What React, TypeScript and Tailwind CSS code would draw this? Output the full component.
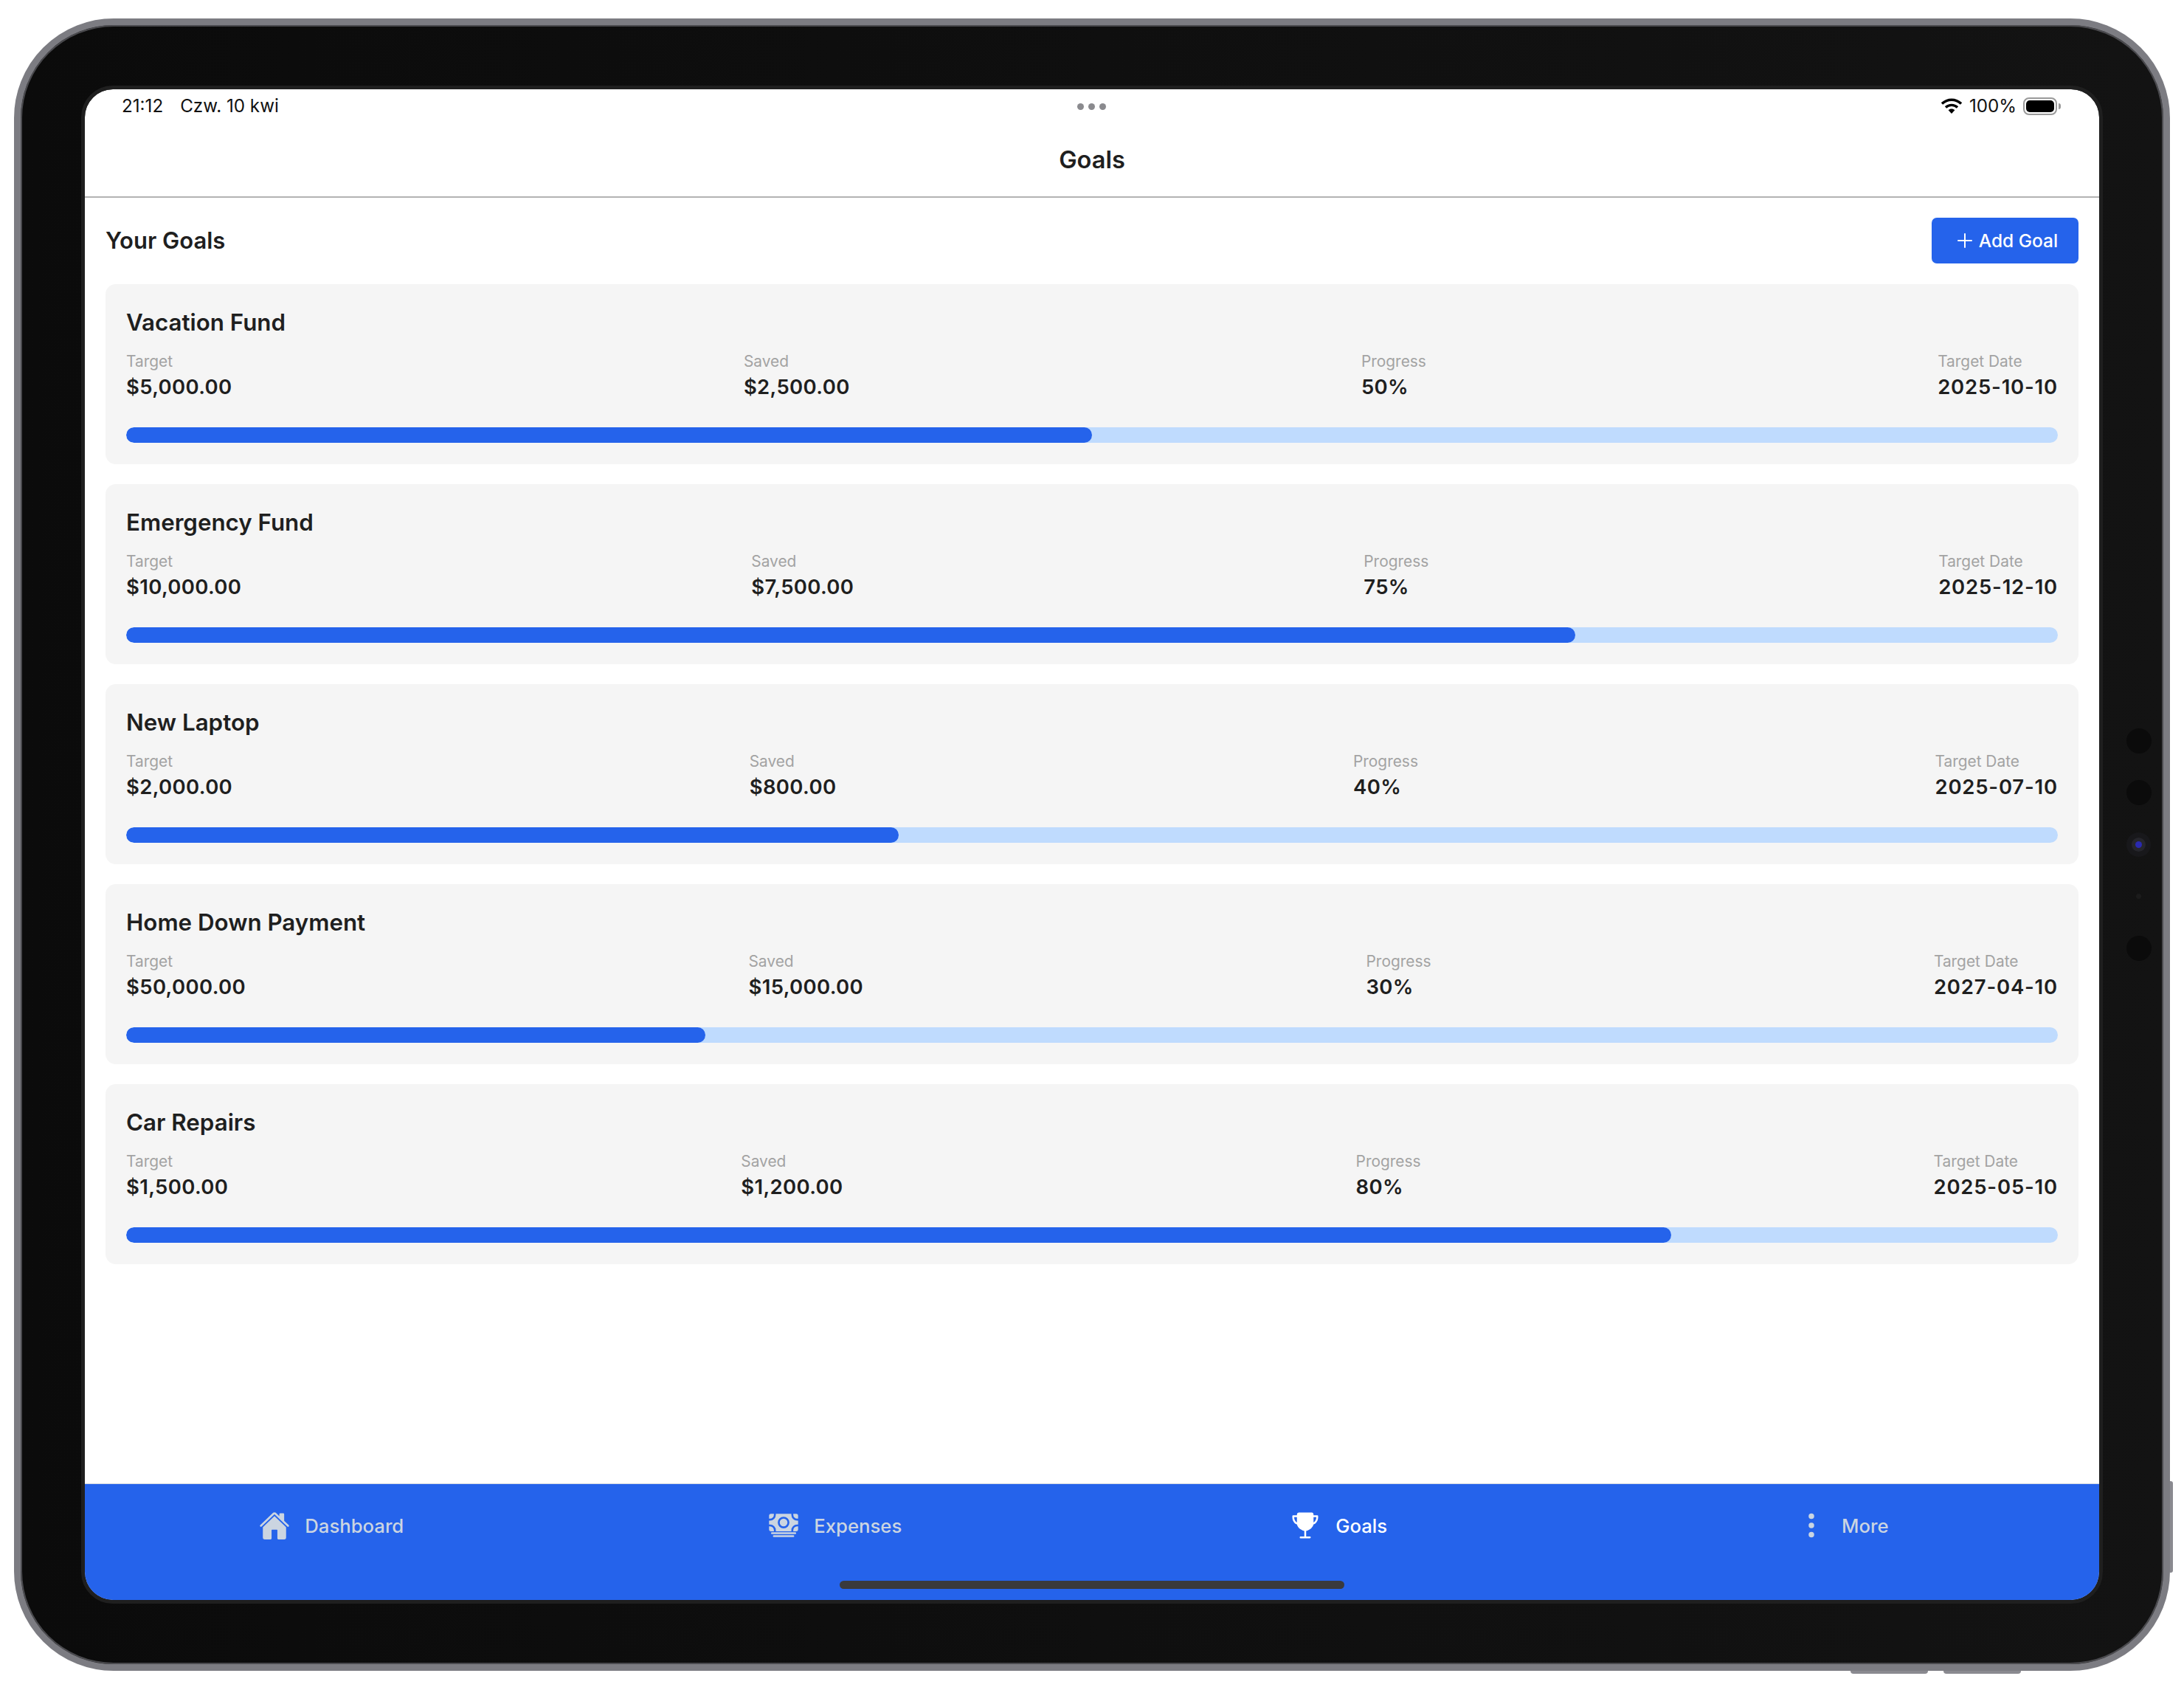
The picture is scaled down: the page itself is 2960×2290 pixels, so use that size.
import React from "react";
import { IoHome, IoCash, IoTrophy, IoEllipsisVertical, IoAdd } from "react-icons/io5";

const goals = [
  { name: "Vacation Fund", target: "$5,000.00", saved: "$2,500.00", progress: 50, date: "2025-10-10" },
  { name: "Emergency Fund", target: "$10,000.00", saved: "$7,500.00", progress: 75, date: "2025-12-10" },
  { name: "New Laptop", target: "$2,000.00", saved: "$800.00", progress: 40, date: "2025-07-10" },
  { name: "Home Down Payment", target: "$50,000.00", saved: "$15,000.00", progress: 30, date: "2027-04-10" },
  { name: "Car Repairs", target: "$1,500.00", saved: "$1,200.00", progress: 80, date: "2025-05-10" },
];

const font = "font-['Inter','Liberation_Sans',sans-serif]";

function Stat({ label, value, wide }: { label: string; value: string; wide?: boolean }) {
  return (
    <div className="flex flex-col">
      <span className="h-[28px] text-[20.9px] leading-[28px] text-[#a3a3a3]">{label}</span>
      <span className={`mt-[3px] h-[34px] text-[27.5px] leading-[34px] font-semibold text-[#1f1f1f] ${wide ? "tracking-[0.8px]" : "tracking-[0.35px]"}`}>{value}</span>
    </div>
  );
}

function GoalCard({ g }: { g: (typeof goals)[number] }) {
  return (
    <div className="h-[244px] rounded-[14px] bg-[#f5f5f5] px-[28px] pt-[28px]">
      <div className="h-[48px] text-[31.3px] leading-[48px] font-semibold text-[#1f1f1f]">{g.name}</div>
      <div className="mt-[15px] flex justify-between">
        <Stat label="Target" value={g.target} />
        <Stat label="Saved" value={g.saved} />
        <Stat label="Progress" value={`${g.progress}%`} />
        <Stat label="Target Date" value={g.date} wide />
      </div>
      <div className="mt-[38px] h-[21px] overflow-hidden rounded-full bg-[#bfdbfe]">
        <div className="h-full rounded-full bg-[#2563eb]" style={{ width: `${g.progress}%` }} />
      </div>
    </div>
  );
}

function Tab({ icon, label, active }: { icon: React.ReactNode; label: string; active?: boolean }) {
  return (
    <div className={`flex flex-1 items-start justify-center gap-[20px] pt-[36px] pr-[14px] ${active ? "text-white" : "text-[#cbd5e1]"}`}>
      <span className="flex h-[40px] w-[42px] items-center justify-center">{icon}</span>
      <span className="text-[25.7px] leading-[41px] font-medium">{label}</span>
    </div>
  );
}

export default function App() {
  return (
    <div className={`h-[2290px] w-[2960px] overflow-hidden bg-white pt-[25px] pl-[19px] ${font}`}>
      <div className="relative h-[2239px] w-[2922px] rounded-[135px] border-[9px] border-[#7c7c82] bg-gradient-to-r from-[#0b0b0b] to-[#131313] pt-[87px] pl-[87px] shadow-[inset_0_0_0_2px_#4a4a4e]">
        {/* bottom buttons */}
        <div className="absolute top-[2230px] left-[2480px] h-[4px] w-[105px] rounded-b-[4px] bg-[#8a8a90]" />
        <div className="absolute top-[2230px] left-[2606px] h-[4px] w-[105px] rounded-b-[4px] bg-[#8a8a90]" />
        {/* side button */}
        <div className="absolute top-[1973px] left-[2913px] h-[124px] w-[4px] rounded-r-[3px] bg-[#8a8a90]" />
        {/* sensors */}
        <div className="absolute top-[953px] left-[2854px] h-[34px] w-[34px] rounded-full bg-[#0b0b0b]" />
        <div className="absolute top-[1023px] left-[2854px] h-[34px] w-[34px] rounded-full bg-[#0b0b0b]" />
        <div className="absolute top-[1094px] left-[2854px] flex h-[33px] w-[33px] items-center justify-center rounded-full bg-[#18181b]">
          <div className="flex h-[19px] w-[19px] items-center justify-center rounded-full bg-[#26262c]">
            <div className="h-[9px] w-[9px] rounded-full bg-[#2a2ab0]" />
          </div>
        </div>
        <div className="absolute top-[1177px] left-[2867px] h-[7px] w-[7px] rounded-full bg-[#1c1c1c]" />
        <div className="absolute top-[1234px] left-[2854px] h-[34px] w-[34px] rounded-full bg-[#0b0b0b]" />

        <div className="relative flex h-[2047px] w-[2730px] flex-col overflow-hidden rounded-[38px] bg-white outline-[5px] outline-[#1f1f1f]">
          {/* status bar */}
          <div className="relative flex h-[44px] items-center justify-between pt-[1px] pr-[52px] pl-[50px] text-[24.2px] leading-[44px] text-[#111111]">
            <div className="flex gap-[23px]">
              <span>21:12</span>
              <span>Czw. 10 kwi</span>
            </div>
            <div className="absolute top-[19px] left-[1345px] flex gap-[6px]">
              <span className="h-[9px] w-[9px] rounded-full bg-[#8a8a8e]" />
              <span className="h-[9px] w-[9px] rounded-full bg-[#8a8a8e]" />
              <span className="h-[9px] w-[9px] rounded-full bg-[#8a8a8e]" />
            </div>
            <div className="flex items-center">
              <svg width="28" height="22" viewBox="0 0 28 22" className="mr-[10px]">
                <path d="M1 7.5C8.5 .5 19.5 .5 27 7.5" fill="none" stroke="#000" strokeWidth="3.4" />
                <path d="M6 12.5C10.5 8.3 17.5 8.3 22 12.5" fill="none" stroke="#000" strokeWidth="3.4" />
                <path d="M9.6 16.2C12 14 16 14 18.4 16.2L14 21Z" fill="#000" />
              </svg>
              <span>100%</span>
              <div className="ml-[9px] flex h-[24px] w-[46px] items-center justify-center rounded-[8px] border-[2px] border-[#9a9a9a]">
                <div className="h-[16px] w-[38px] rounded-[5px] bg-black" />
              </div>
              <div className="ml-[2px] h-[8px] w-[3px] rounded-r-[3px] bg-[#9a9a9a]" />
            </div>
          </div>
          {/* header */}
          <div className="flex h-[103px] items-center justify-center border-b-[2px] border-[#b3b3b3] pt-[1px]">
            <span className="text-[32.6px] leading-[48px] font-semibold text-[#1f1f1f]">Goals</span>
          </div>
          {/* content */}
          <div className="flex-1 px-[28px]">
            <div className="flex h-[117px] items-center justify-between pt-[27px] pb-[28px]">
              <span className="text-[31px] leading-[48px] font-semibold text-[#1f1f1f]">Your Goals</span>
              <button className="flex h-[62px] w-[199px] items-center justify-center gap-[3px] rounded-[7px] bg-[#2563eb] pl-[1px] text-[24.5px] font-medium text-white">
                <IoAdd size={32} />
                <span>Add Goal</span>
              </button>
            </div>
            <div className="flex flex-col gap-[27px]">
              {goals.map((g) => (
                <GoalCard key={g.name} g={g} />
              ))}
            </div>
          </div>
          {/* tab bar */}
          <div className="relative flex h-[158px] border-t-[1px] border-[#d0d7e2] bg-[#2563eb]">
            <Tab icon={<IoHome size={43} />} label="Dashboard" />
            <Tab icon={<IoCash size={44} />} label="Expenses" />
            <Tab icon={<IoTrophy size={40} />} label="Goals" active />
            <Tab icon={<IoEllipsisVertical size={40} />} label="More" />
            <div className="absolute top-[131px] left-[1023px] h-[11px] w-[684px] rounded-full bg-[#3a3a3c]" />
          </div>
        </div>
      </div>
    </div>
  );
}
